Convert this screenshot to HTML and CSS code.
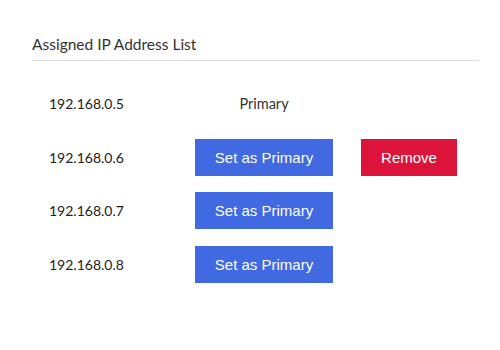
FILE: index.html
```html
<!DOCTYPE html>
<html lang="en">
<head>
    <meta charset="UTF-8">
    <meta name="viewport" content="width=device-width, initial-scale=1.0">
    <title>Assigned IP Address List</title>
    <link rel="stylesheet" href="styles.css">
</head>
<body>

    <div class="panel">
        <h2 class="panel-title">Assigned IP Address List</h2>

        <div class="ip-list">
            <div class="ip">192.168.0.5</div>
            <div class="primary-label">Primary</div>
            <div></div>

            <div class="ip">192.168.0.6</div>
            <button class="btn btn-blue">Set as Primary</button>
            <button class="btn btn-red">Remove</button>

            <div class="ip">192.168.0.7</div>
            <button class="btn btn-blue">Set as Primary</button>
            <div></div>

            <div class="ip">192.168.0.8</div>
            <button class="btn btn-blue">Set as Primary</button>
            <div></div>
        </div>
    </div>

</body>
</html>
```

FILE: styles.css
```css
body {
    margin: 0;
    background: #fff;
    font-family: Lato, "Open Sans", sans-serif;
    color: #222;
}
.panel {
    padding: 34px 21px 0 32px;
}
.panel-title {
    margin: 0;
    font-size: 15.5px;
    font-weight: normal;
    line-height: 20px;
    color: #333;
    padding-bottom: 6px;
    border-bottom: 1px solid #dcdcdc;
}
.ip-list {
    display: grid;
    grid-template-columns: 118px 138px 96px;
    grid-auto-rows: 37px;
    column-gap: 28px;
    row-gap: 16.5px;
    padding: 24px 0 0 17px;
    align-items: center;
}
.ip {
    font-size: 14px;
}
.primary-label {
    font-size: 14.5px;
    text-align: center;
    color: #333;
}
.btn {
    height: 37px;
    padding: 0;
    border: none;
    color: #fff;
    font-family: "Liberation Sans", Arial, sans-serif;
    font-size: 15px;
    white-space: nowrap;
    cursor: pointer;
}
.btn-blue {
    background: #4169e1;
}
.btn-red {
    background: #dc143c;
}
```
